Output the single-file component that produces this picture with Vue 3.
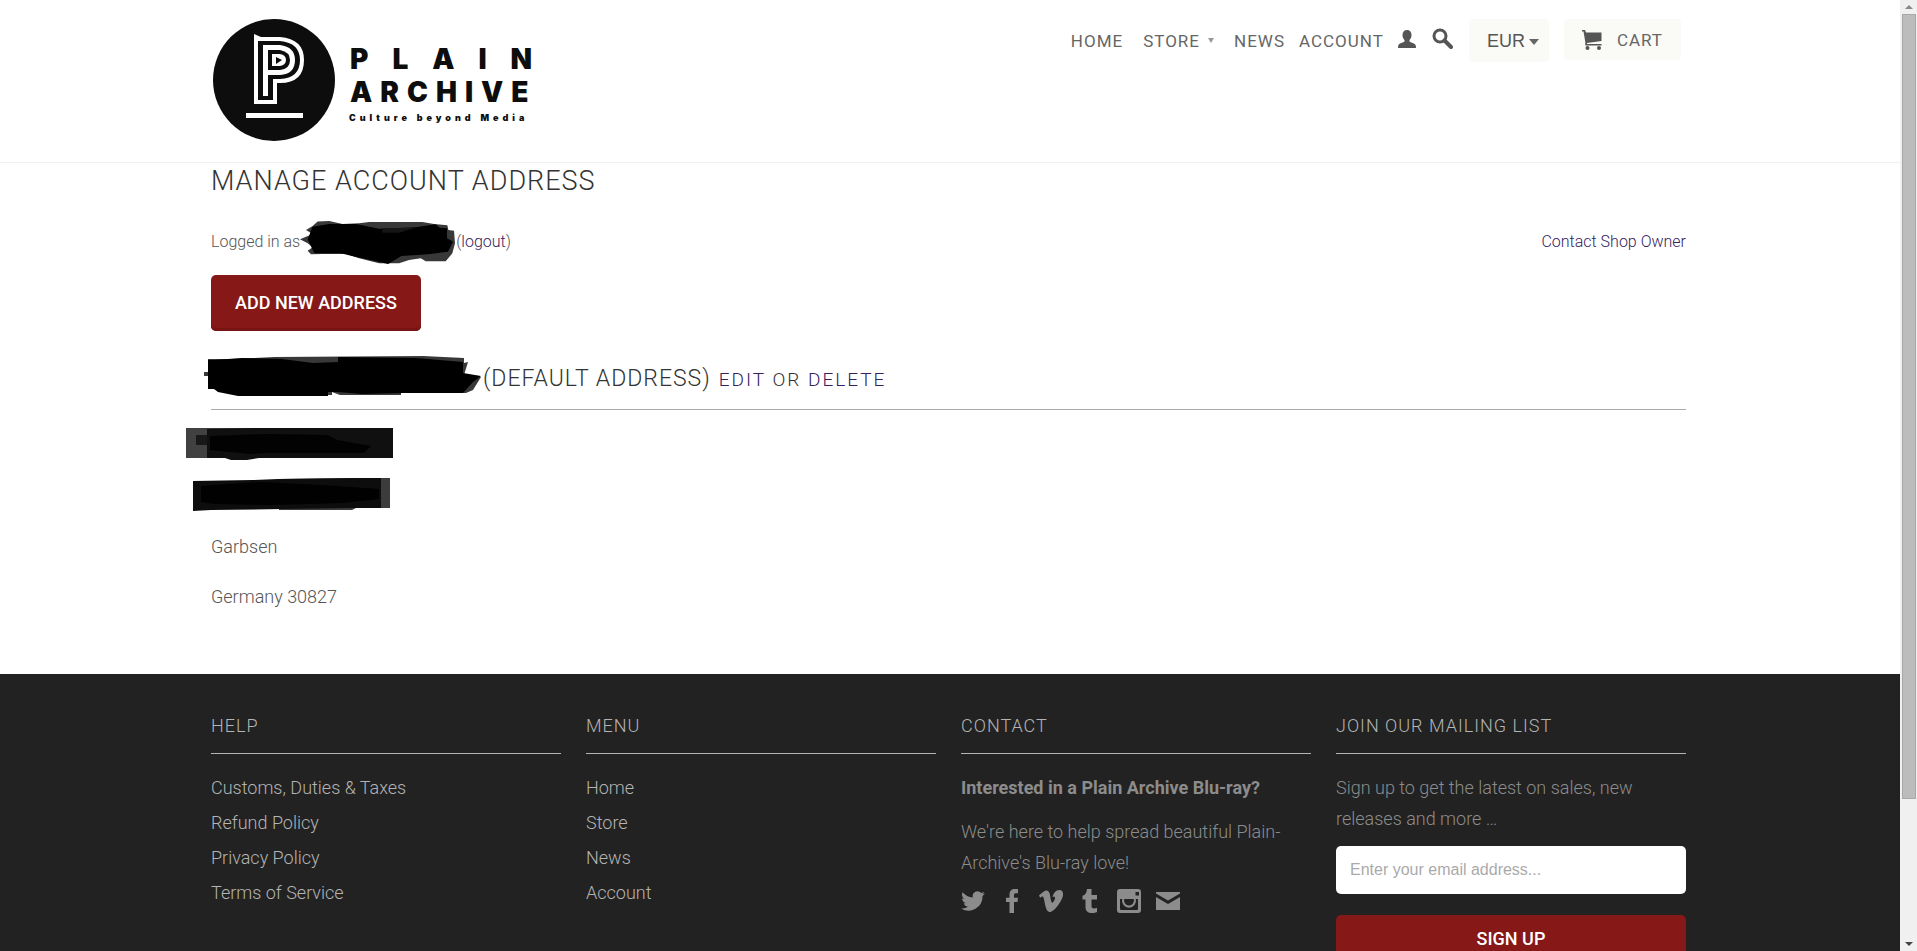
<script setup>
import { ref } from 'vue'

const currency = ref('EUR')
const email = ref('')

const helpLinks = ['Customs, Duties & Taxes', 'Refund Policy', 'Privacy Policy', 'Terms of Service']
const menuLinks = ['Home', 'Store', 'News', 'Account']

const social = [
  { name: 'Twitter', path: 'M24 4.6a10 10 0 0 1-2.8.8 5 5 0 0 0 2.1-2.7 10 10 0 0 1-3.1 1.2 4.9 4.9 0 0 0-8.4 4.5A14 14 0 0 1 1.700 3.200a4.900 4.900 0 0 0 1.500 6.600 5 5 0 0 1-2.200-.6c0 2.300 1.600 4.400 3.900 4.900a5 5 0 0 1-2.200.1 4.900 4.900 0 0 0 4.600 3.400A10 10 0 0 1 0 19.500a14 14 0 0 0 21.500-12.400A10 10 0 0 0 24 4.600z' },
  { name: 'Facebook', path: 'M9.500 24V13H6V8.800h3.500V5.500C9.500 2 11.500 0 14.800 0H18v4.200h-2.200c-1.500 0-1.800.7-1.800 1.800v2.800h4l-.5 4.200H14v11z' },
  { name: 'Vimeo', path: 'M0 6.600C2 5 5 1.800 7 1.600c2.200-.2 3.500 1.300 4 4.500.6 3.800 1.200 7.600 2.200 7.600.8 0 2.800-3 2.900-4.700.1-1.500-1.200-1.600-2.600-1C14.600 4 17 .8 20.500 1c2.600.1 3.700 1.800 3.500 5-.2 4.400-8 16.500-12.800 17-2.700 0-3.800-2.300-4.800-6C5.500 13.500 5 7.800 3.500 7.600c-.6 0-1.500.6-2.300 1.100z' },
  { name: 'Tumblr', path: 'M9 0h4.500v6H19v4.500h-5.500v6c0 2.300.8 3 2.500 3 1 0 2-.3 3-.8v4.200c-1.500.8-3 1.100-5 1.100-4 0-6.500-2-6.500-6v-7.500H4.500V6.800C7.200 6 8.800 3.500 9 0z' },
  { name: 'Instagram', path: 'M3 0h18a3 3 0 0 1 3 3v18a3 3 0 0 1-3 3H3a3 3 0 0 1-3-3V3a3 3 0 0 1 3-3zm15.500 3v3.500H22V3zM3 10v9.500c0 1 .5 1.500 1.500 1.500h15c1 0 1.500-.5 1.500-1.500V10h-2.200a7 7 0 1 1-13.600 0zM7.200 10a5 5 0 1 0 9.600 0z' },
  { name: 'Email', path: 'M0 3h24v1.500l-12 7-12-7zM0 8l12 7L24 8v13H0z' },
]
</script>

<template>
  <div class="window">
    <div class="page">
      <header class="header">
        <div class="container header-inner">
          <a href="#" class="logo" aria-label="Plain Archive">
            <svg width="350" height="124" viewBox="0 0 350 124">
              <circle cx="61" cy="62" r="61" fill="#0d0d0d" />
              <path d="M41 16l7 3h19q24 2 24 23q0 23-24 23h-3v21H41z" fill="#fff" />
              <path d="M45 23h22q20 2 20 19q0 18-20 19h-7v21H45z" fill="#0d0d0d" />
              <path d="M50 27h17q15 2 15 15q0 14-15 15H55v21h-5z" fill="#fff" />
              <path d="M55 32h12q10 2 10 10q0 9-10 10H55z" fill="#0d0d0d" />
              <path d="M59 36h8q6 1 6 6q0 5-6 6h-8z" fill="#fff" />
              <path d="M63 39l6 3-6 4z" fill="#0d0d0d" />
              <rect x="33" y="95" width="57" height="5" fill="#fff" />
              <text x="137" y="51" class="logo-plain">PLAIN</text>
              <text x="137" y="84" class="logo-archive">ARCHIVE</text>
              <text x="136" y="103" class="logo-tag">Culture beyond Media</text>
            </svg>
          </a>

          <nav class="nav">
            <a href="#" class="nav-home">HOME</a>
            <a href="#" class="nav-store">
              STORE
              <svg width="6" height="5" viewBox="0 0 6 5"><path d="M0 0h6L3 5z" fill="#999" /></svg>
            </a>
            <a href="#" class="nav-news">NEWS</a>
            <a href="#" class="nav-account">ACCOUNT</a>
            <a href="#" class="nav-user" aria-label="My account">
              <svg width="18" height="18" viewBox="0 0 18 18">
                <path d="M9 0c3 0 4.500 2 4.500 5 0 2-.8 4-2 5v1.500c1 1 5 1.500 6 3.500.4.800.5 1.800.5 3H0c0-1.200.1-2.200.5-3 1-2 5-2.500 6-3.500V10c-1.200-1-2-3-2-5C4.500 2 6 0 9 0z" fill="#555" />
              </svg>
            </a>
            <a href="#" class="nav-search" aria-label="Search">
              <svg width="21" height="21" viewBox="0 0 21 21" fill="none" stroke="#555">
                <circle cx="8" cy="8" r="6" stroke-width="3" />
                <path d="M12.500 12.500l6.500 6.500" stroke-width="4" stroke-linecap="round" />
              </svg>
            </a>
            <label class="currency">
              <select v-model="currency" aria-label="Currency">
                <option>EUR</option>
                <option>USD</option>
              </select>
              <svg width="10" height="6" viewBox="0 0 10 6"><path d="M0 0h10L5 6z" fill="#666" /></svg>
            </label>
            <a href="#" class="cart">
              <svg width="20" height="20" viewBox="0 0 20 20">
                <path d="M0 0h3l1 2.500h15.500V11L5 13v1h14.500v1.500H3.300V12L1.500 1.500H0z" fill="#555" />
                <circle cx="5.500" cy="18" r="2" fill="#555" />
                <circle cx="17" cy="18" r="2" fill="#555" />
              </svg>
              CART
            </a>
          </nav>
        </div>
      </header>

      <main class="container main">
        <h1>MANAGE ACCOUNT ADDRESS</h1>
        <div class="session">
          <p>
            <span>Logged in as</span>
            <svg class="scribble-name" width="155" height="43" viewBox="362 183 466 129">
              <path d="M362 238l38-16-20-12 20-12 15-14 35-1 40 9 50-2 30-4h160l35 6 40 4 3 14 17 2 3 38-8 30-20 24h-60l-15-9-35 5-30 10h-60l-60-15-40-13h-70l-35 1-10-11 15-10-15-12z" fill="#383838" />
              <path d="M385 238l15-38 50-8h80l70 14 110-4 60-9 12 10 22 2v30l18 10-15 30-60 8-80 5-40 24-92-20-50-12h-80z" fill="#000" />
              <path d="M610 204h95l-45 14h-50z" fill="#161616" />
            </svg>
            <span>(<a href="#">logout</a>)</span>
          </p>
          <a href="#">Contact Shop Owner</a>
        </div>

        <button type="button" class="btn add">ADD NEW ADDRESS</button>

        <h2>
          <svg class="scribble-title" width="277" height="40" viewBox="204 356 277 40">
            <path d="M204 372h4v-13h24l43-2 148-1 41 2v5l4-1-4 13 17 2-8 13-7 3-65-1v3h-61l-8-3v3h-62l-35-4v-9h-27v-6h-4z" fill="#383838" />
            <path d="M208 360h6l28-2 40 1 31 4 25-1v-5l78 1 47 4v11l18 3-8 6-10 11h-59l-42 1-24-2h-10v4h-90l-20-4-4-3h-6z" fill="#000" />
          </svg>
          <span>(DEFAULT ADDRESS)</span>
          <small><a href="#">EDIT</a> OR <a href="#">DELETE</a></small>
        </h2>

        <p class="line">
          <svg class="scribble-street" width="207" height="33" viewBox="0 0 207 33">
            <path d="M0 0h68v30H0z" fill="#414141" />
            <path d="M21 1l48-1h138v30H73l-12 2H45l-6-2H21z" fill="#101010" />
            <path d="M24 8l55-2 63 1 9 5 34 6-7 7H80l-16 1-40-4z" fill="#020202" />
            <path d="M10 7h11v10H10z" fill="#181818" />
          </svg>
        </p>
        <p class="line">
          <svg class="scribble-extra" width="197" height="33" viewBox="0 0 197 33">
            <path d="M86 1l74-1h37v30h-34l-4 2H86z" fill="#3c3c3c" />
            <path d="M0 3l60-1 25-1 85-1h18v30h-30l-68 1-72 1-18 1z" fill="#0d0d0d" />
            <path d="M8 8l60-4 60 3 58 4v10l-38 4-68 2-58-1-14-2z" fill="#010101" />
          </svg>
        </p>
        <p class="line">Garbsen</p>
        <p class="line">Germany 30827</p>
      </main>

      <footer class="footer">
        <div class="container footer-grid">
          <section>
            <h3>HELP</h3>
            <ul>
              <li v-for="link in helpLinks" :key="link"><a href="#">{{ link }}</a></li>
            </ul>
          </section>
          <section>
            <h3>MENU</h3>
            <ul>
              <li v-for="link in menuLinks" :key="link"><a href="#">{{ link }}</a></li>
            </ul>
          </section>
          <section>
            <h3>CONTACT</h3>
            <p class="lead"><strong>Interested in a Plain Archive Blu-ray?</strong></p>
            <p>We're here to help spread beautiful Plain-Archive's Blu-ray love!</p>
            <div class="social">
              <a v-for="item in social" :key="item.name" href="#" :aria-label="item.name">
                <svg width="24" height="24" viewBox="0 0 24 24">
                  <path :d="item.path" fill="#8c8c8c" fill-rule="evenodd" />
                </svg>
              </a>
            </div>
          </section>
          <section>
            <h3>JOIN OUR MAILING LIST</h3>
            <p>Sign up to get the latest on sales, new releases and more …</p>
            <form @submit.prevent>
              <input v-model="email" type="email" aria-label="Email address" placeholder="Enter your email address..." />
              <button type="submit" class="btn signup">SIGN UP</button>
            </form>
          </section>
        </div>
      </footer>
    </div>

    <div class="scrollbar" aria-hidden="true">
      <svg width="17" height="14" viewBox="0 0 17 14"><path d="M5 9l4-4 4 4z" fill="#888" /></svg>
      <div class="thumb"></div>
      <svg class="down" width="17" height="14" viewBox="0 0 17 14"><path d="M5 5l4 4 4-4z" fill="#444" /></svg>
    </div>
  </div>
</template>

<style>
body {
  margin: 0;
  background: #fff;
}
</style>

<style scoped>
* {
  box-sizing: border-box;
}

.window {
  display: flex;
  height: 100vh;
  overflow: hidden;
  font-family: Roboto, "Liberation Sans", sans-serif;
  font-size: 18px;
  font-weight: 300;
  line-height: 31px;
  color: #555;
}

.page {
  flex: 1;
  min-width: 0;
  overflow: hidden;
}

h1,
h2,
h3,
p,
ul {
  margin: 0;
  padding: 0;
  font-weight: 300;
}

a {
  text-decoration: none;
  color: #35225f;
}

svg {
  display: block;
  flex: none;
}

.container {
  max-width: 1522px;
  margin: 0 auto;
  padding: 0 25px 0 22px;
}

/* header */
.header {
  border-bottom: 1px solid #f0f0f0;
}

.header-inner {
  display: flex;
  justify-content: space-between;
  align-items: flex-start;
  padding-bottom: 20px;
}

.logo {
  padding: 18px 0 0 2px;
}

.logo text {
  font-family: Inter, "Liberation Sans", sans-serif;
  font-weight: 900;
  fill: #0d0d0d;
}

.logo-plain {
  font-size: 28px;
  letter-spacing: 24px;
}

.logo-archive {
  font-size: 28px;
  letter-spacing: 8px;
}

.logo-tag {
  font-size: 9px;
  letter-spacing: 4px;
}

.nav {
  display: flex;
  align-items: center;
  padding: 19px 5px 0 0;
  font-size: 17px;
  font-weight: 400;
  line-height: 24px;
  letter-spacing: 1px;
}

.nav a {
  color: #666;
}

.nav-home {
  margin-right: 20px;
}

.nav-store {
  display: flex;
  align-items: center;
  gap: 8px;
  margin-right: 20px;
}

.nav-news,
.nav-account {
  margin-right: 14px;
}

.nav-user,
.nav-search {
  margin: 0 16px 4px 0;
}

.currency {
  position: relative;
  margin-right: 15px;
}

.currency select {
  display: block;
  width: 80px;
  height: 43px;
  padding: 0 18px;
  border: 0;
  border-radius: 4px;
  appearance: none;
  background: #fafaf6;
  font: 18px "Liberation Sans", Arial, sans-serif;
  color: #555;
}

.currency svg {
  position: absolute;
  top: 20px;
  right: 10px;
  pointer-events: none;
}

.cart {
  display: flex;
  align-items: center;
  gap: 15px;
  height: 41px;
  margin-bottom: 2px;
  padding: 0 18px;
  border-radius: 4px;
  background: #fafaf6;
}

/* account */
.main {
  padding-bottom: 62px;
}

h1 {
  font-size: 27px;
  line-height: 36px;
  letter-spacing: 1px;
  color: #333;
}

.session {
  display: flex;
  justify-content: space-between;
  margin-top: 27px;
  font-size: 16px;
}

.session p {
  display: flex;
}

.scribble-name {
  margin: -5px 1px -7px 0;
}

.btn {
  display: block;
  border: 0;
  border-radius: 5px;
  background: #861818;
  box-shadow: inset 0 -3px 0 #781414;
  color: #fff;
  font: 500 18px/24px Roboto, sans-serif;
}

.add {
  height: 56px;
  margin-top: 18px;
  padding: 0 24px;
}

h2 {
  display: flex;
  align-items: baseline;
  margin-top: 29px;
  padding-bottom: 10px;
  border-bottom: 1px solid #aaa;
  font-size: 23px;
  line-height: 38px;
  letter-spacing: 1px;
  color: #333;
}

h2 small {
  margin-left: 8px;
  font-size: 19px;
  letter-spacing: 2px;
}

.scribble-title {
  align-self: center;
  margin: -8px 2px 0 -7px;
}

.line {
  display: flex;
  height: 31px;
  margin-top: 19px;
}

.line svg {
  margin-top: -3px;
}

h2 + .line {
  margin-top: 21px;
}

.scribble-street {
  margin-left: -25px;
}

.scribble-extra {
  margin-left: -18px;
}

/* footer */
.footer {
  min-height: 360px;
  padding-top: 36px;
  background: #222;
  color: #8c8c8c;
}

.footer-grid {
  display: grid;
  grid-template-columns: repeat(4, 1fr);
  gap: 25px;
}

h3 {
  margin-bottom: 18px;
  padding-bottom: 12px;
  border-bottom: 1px solid #b4b4b4;
  font-size: 18px;
  letter-spacing: 1px;
  color: #b4b4b4;
}

ul {
  list-style: none;
}

li {
  height: 35px;
}

.footer a {
  color: #b4b4b4;
}

.lead {
  margin-bottom: 13px;
}

strong {
  font-weight: 700;
}

.social {
  display: flex;
  gap: 15px;
  margin-top: 11px;
}

input {
  display: block;
  width: 100%;
  height: 48px;
  margin: 12px 0 21px;
  padding: 0 14px;
  border: 0;
  border-radius: 5px;
  background: #fff;
  font: 16px "Liberation Sans", Arial, sans-serif;
}

input::placeholder {
  color: #aaa;
}

.signup {
  width: 100%;
  height: 48px;
}

/* scrollbar */
.scrollbar {
  display: flex;
  flex-direction: column;
  width: 17px;
  background: #f0f0f0;
}

.thumb {
  height: 82.500%;
  margin: 0 1px 0 2px;
  border: 1px solid #a8a8a8;
  background: #bcbcbc;
}

.down {
  margin-top: auto;
}
</style>
